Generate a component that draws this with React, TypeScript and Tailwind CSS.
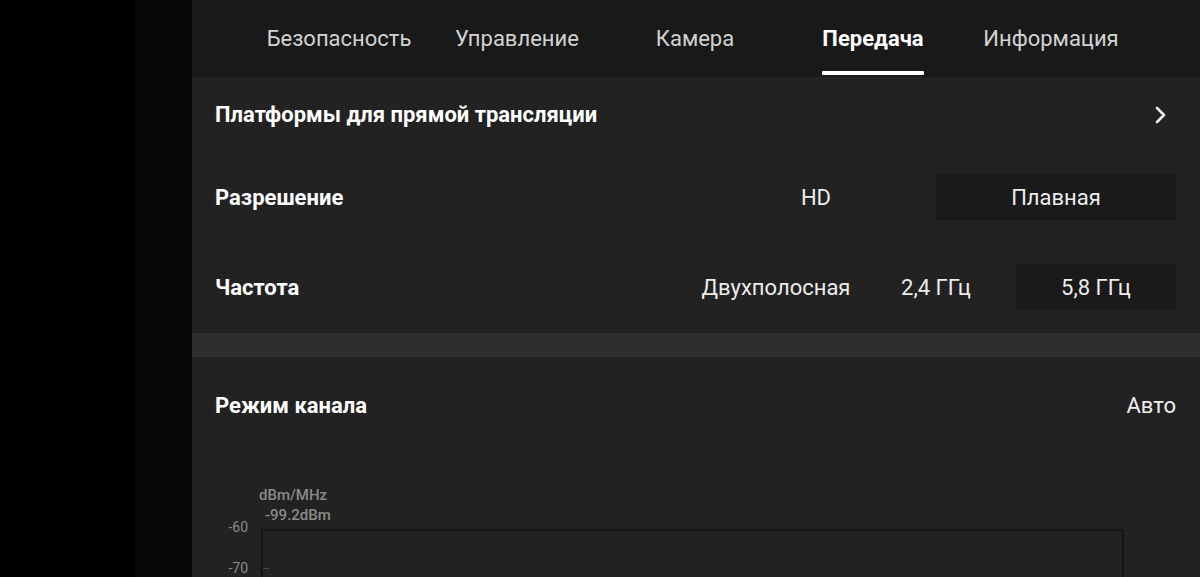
const tabs = ['Безопасность', 'Управление', 'Камера', 'Передача', 'Информация'];

function Chevron() {
  return (
    <svg width="14" height="18" viewBox="0 0 14 18" fill="none">
      <polyline points="3,2 10,9 3,16" stroke="#f2f2f2" strokeWidth="2.6" strokeLinecap="round" strokeLinejoin="round" />
    </svg>
  );
}

function Segmented({ items, active, width }: { items: string[]; active: number; width: string }) {
  return (
    <div className="flex">
      {items.map((item, i) => (
        <div
          key={item}
          className={`${width} h-[46px] flex items-center justify-center text-[22px] text-[#ececec] rounded-[2px] ${
            i === active ? 'bg-[#1a1a1a]' : ''
          }`}
        >
          {item}
        </div>
      ))}
    </div>
  );
}

export default function App() {
  return (
    <div className="flex h-[577px] w-[1200px] overflow-hidden bg-black font-['Roboto',sans-serif]">
      {/* Left video edge */}
      <div className="w-[135px] shrink-0 bg-black" />
      <div className="w-[57px] shrink-0 bg-[#060606]" />

      <div className="flex-1 bg-[#222222]">
        {/* Tabs */}
        <header className="h-[77px] bg-[#191919] flex pl-[58px]">
          {tabs.map((t) => {
            const active = t === 'Передача';
            return (
              <div key={t} className="w-[178px] flex items-center justify-center pb-[1px]">
                <span
                  className={`relative text-[22px] ${
                    active ? 'font-bold text-white' : 'text-[#d2d2d2]'
                  }`}
                >
                  {t}
                  {active && (
                    <span className="absolute left-0 right-0 top-[49px] h-[4px] bg-white rounded-[1px]" />
                  )}
                </span>
              </div>
            );
          })}
        </header>

        {/* Settings */}
        <div className="pl-[23px] pr-[24px]">
          <div className="h-[74px] flex items-center justify-between">
            <span className="text-[22px] font-bold text-white">Платформы для прямой трансляции</span>
            <span className="mr-[8px] mt-[1px]">
              <Chevron />
            </span>
          </div>

          <div className="h-[92px] flex items-center justify-between">
            <span className="text-[22px] font-bold text-white">Разрешение</span>
            <Segmented items={['HD', 'Плавная']} active={1} width="w-[240px]" />
          </div>

          <div className="h-[90px] flex items-center justify-between pb-[2px]">
            <span className="text-[22px] font-bold text-white">Частота</span>
            <Segmented items={['Двухполосная', '2,4 ГГц', '5,8 ГГц']} active={2} width="w-[160px]" />
          </div>
        </div>

        <div className="h-[24px] bg-[#2e2e2e]" />

        <div className="pl-[23px] pr-[24px]">
          <div className="h-[96px] flex items-center justify-between">
            <span className="text-[22px] font-bold text-white">Режим канала</span>
            <span className="text-[22px] text-[#f0f0f0]">Авто</span>
          </div>

          {/* Spectrum chart */}
          <div className="flex">
            <div className="w-[33px] flex flex-col items-end pt-[64px] gap-[21px] text-[14px] leading-[20px] text-[#8a8a8a]">
              <span>-60</span>
              <span>-70</span>
            </div>
            <div className="ml-[13px] flex-1 pr-[52px] pt-[32px]">
              <div className="-ml-[2px] text-[15px] leading-[20px] font-medium text-[#8a8a8a]">dBm/MHz</div>
              <div className="pl-[4px] text-[15px] leading-[20px] font-medium text-[#8a8a8a]">-99.2dBm</div>
              <div className="mt-[4px] h-[80px] border-t-2 border-l-2 border-r-2 border-[#151515] pt-[37px]">
                <div className="w-[6px] h-[1px] bg-[#4a4a4a]" />
              </div>
            </div>
          </div>
        </div>
      </div>
    </div>
  );
}
